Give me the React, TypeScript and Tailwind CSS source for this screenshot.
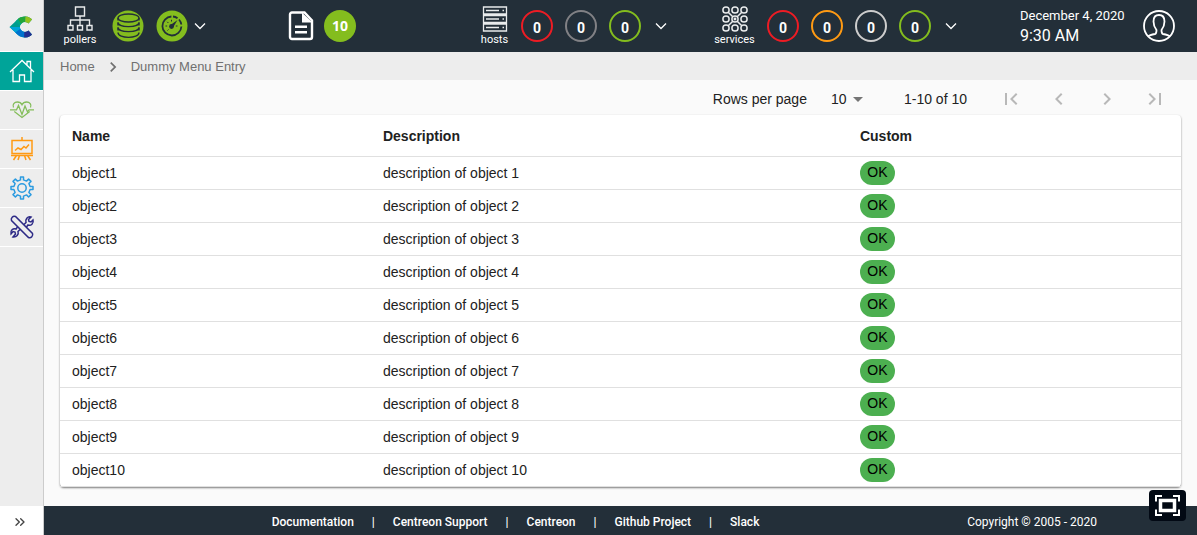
import type { ReactNode } from 'react';
import { ChevronsRight } from 'lucide-react';
import { MdArrowDropDown, MdChevronLeft, MdChevronRight, MdFirstPage, MdLastPage } from 'react-icons/md';

const objects = Array.from({ length: 10 }, (_, i) => ({
  name: `object${i + 1}`,
  description: `description of object ${i + 1}`,
  status: 'OK',
}));

const footerLinks = ['Documentation', 'Centreon Support', 'Centreon', 'Github Project', 'Slack'];

function Logo() {
  return (
    <svg width="24" height="24" viewBox="0 0 24 24" aria-hidden="true">
      <clipPath id="logo-shape">
        <path d="M.5 12 8.500 4.500C11 2 14 1.300 17 1.500c2.500.200 4.500 1.200 6 3L19.500 8.500a5 5 0 1 0 0 7L23 19.500c-1.500 1.800-3.500 2.800-6 3-3 .200-6-.500-8.500-3z" />
      </clipPath>
      <g clipPath="url(#logo-shape)">
        <path d="M0 0h24v24H0z" fill="#009c8f" />
        <path d="M6 0h5l3 8.500-3 2L5 5z" fill="#00a887" />
        <path d="M9.500 0H17l-1.500 9-2.500 1-4-6z" fill="#23a638" />
        <path d="M16.500 0H24v12l-8-3z" fill="#94c11f" />
        <path d="M0 12h13v4l-5 4z" fill="#00a3d9" />
        <path d="m5 18.500 6-4.500 5 2-.5 8H8z" fill="#0072ce" />
        <path d="M15.500 14H24v10h-9z" fill="#232f92" />
      </g>
    </svg>
  );
}

function HomeIcon() {
  return (
    <svg width="26" height="26" viewBox="0 0 26 26" fill="none" stroke="#fff" strokeWidth="1.300" aria-hidden="true">
      <path d="M1 14 13 2.500 25 14M4 12v11.500h6.500V17h5v6.500H22V12M18 7V3.500h3.500v7" />
    </svg>
  );
}

function HeartIcon() {
  return (
    <svg width="26" height="26" viewBox="0 0 26 26" fill="none" stroke="#84bd5a" strokeWidth="1.300" aria-hidden="true">
      <path d="M4.500 10.500C3 7.500 5.500 5 8.300 5c2.200 0 3.900 1.200 4.700 2.800C13.800 6.200 15.500 5 17.700 5c2.800 0 5.300 2.500 3.800 5.500M5.300 14.500 13 20.500l7.700-6" />
      <path d="M1 12.800h6.500l2-4.300 3.500 9 3-8.500 2.500 6 1.500-2.200h5" />
    </svg>
  );
}

function ReportIcon() {
  return (
    <svg width="26" height="26" viewBox="0 0 26 26" fill="none" stroke="#ff9a13" strokeWidth="1.500" aria-hidden="true">
      <path d="M3 4.500h20v13H3zM13 1v3.500M2 19.500h22M7.500 19.500l-3 4.500M10.500 19.500 9 24M15.500 19.500 17 24M18.500 19.500l3 4.500" />
      <path d="m6 14.500 3-2.500 3 1.500 3-3 2 1.500 3-3.500" />
    </svg>
  );
}

function GearIcon() {
  return (
    <svg width="26" height="26" viewBox="0 0 26 26" fill="none" stroke="#2b9be0" strokeWidth="1.500" strokeLinejoin="round" aria-hidden="true">
      <path d="M11.500 4.900V2h3v2.900l3 1.200 2.100-2.100 2.400 2.400-2.100 2.100 1.200 3H24v3h-2.900l-1.200 3 2.100 2.100-2.400 2.400-2.100-2.100-3 1.200V24h-3v-2.900l-3-1.200L6.400 22 4 19.600l2.100-2.100-1.200-3H2v-3h2.900l1.200-3L4 6.400 6.400 4l2.100 2.100z" />
      <circle cx="13" cy="13" r="4.200" />
    </svg>
  );
}

function ToolsIcon() {
  return (
    <svg width="26" height="26" viewBox="0 0 26 26" fill="none" stroke="#2d2a86" strokeWidth="1.500" aria-hidden="true">
      <path d="M2.500 6.500c-1-2.500 1.500-5 4-4L23.500 19.500c1 2.500-1.500 5-4 4z" />
      <path d="m15 10.500 2-2c-1-3 1.500-6.500 5-5.500l-2.500 2.500.500 2 2 .500L24 6c1 3.500-2 6-5 5l-1.500 2M11 15.500l-2 2c1 3-1.500 6-5 5.500L6.500 20 6 18l-2-.500L2 20c-1-3.500 2-6 5-5l1.500-2" />
    </svg>
  );
}

function PollersIcon() {
  return (
    <svg width="26" height="26" viewBox="0 0 26 26" fill="none" stroke="#e9ebec" strokeWidth="1.400" aria-hidden="true">
      <path d="M8.500 1h9v9h-9zM13 10v9.500M3.500 19.500V14h19v5.500M1 19.500h5V24H1zM10.500 19.500h5V24h-5zM20 19.500h5V24h-5z" />
    </svg>
  );
}

function HostsIcon() {
  return (
    <svg width="26" height="26" viewBox="0 0 26 26" fill="none" stroke="#e9ebec" strokeWidth="1.300" aria-hidden="true">
      <path d="M1.500 1h23v7h-23zM1.500 9.500h23v7h-23zM1.500 18h23v7h-23zM4 4.500h13M4 13h13M4 21.500h13M20.500 4.500H22M20.500 13H22M20.500 21.500H22" />
    </svg>
  );
}

function ServicesIcon() {
  const centers = [4, 13, 22];
  return (
    <svg width="26" height="26" viewBox="0 0 26 26" fill="none" stroke="#e9ebec" strokeWidth="1.500" aria-hidden="true">
      {centers.map((y) => centers.map((x) => <circle key={`${x}-${y}`} cx={x} cy={y} r="3.100" />))}
      <path d="m6.200 6.200 4.600 4.600M19.800 6.200l-4.600 4.600M6.200 19.800l4.600-4.600M19.800 19.800l-4.600-4.600" />
      <circle cx="13" cy="13" r=".7" fill="#e9ebec" />
    </svg>
  );
}

function DatabaseIcon() {
  return (
    <svg width="32" height="32" viewBox="0 0 32 32" fill="none" stroke="#232f39" strokeWidth="1.400" aria-hidden="true">
      <circle cx="16" cy="16" r="15.500" fill="#84bd1e" stroke="none" />
      <ellipse cx="16.500" cy="8" rx="10.500" ry="4" />
      <path d="M6 12.500c0 5.500 21 5.500 21 0M6 17.500c0 5.500 21 5.500 21 0M6 22.500c0 6.500 21 6.500 21 0" />
      <path d="M6 8v2.500M27 8v2.500M6 12.500v3M27 12.500v3M6 17.500v3M27 17.500v3" />
    </svg>
  );
}

function GaugeIcon() {
  return (
    <svg width="32" height="32" viewBox="0 0 32 32" fill="none" stroke="#232f39" strokeWidth="1.800" aria-hidden="true">
      <circle cx="16" cy="16" r="15.500" fill="#84bd1e" stroke="none" />
      <path d="M17 6.500a9.500 9.500 0 0 1 4.500 1.700M23 9.500a9.500 9.500 0 0 1 2.300 5M25.400 16.500a9.500 9.500 0 1 1-10-10" />
      <circle cx="15.500" cy="16.500" r="2.400" fill="#232f39" stroke="none" />
      <path d="m21.500 10-7 5 2.500 2.500z" fill="#232f39" stroke="none" />
      <path d="M15.500 9.800v1.700M9.500 16h1.700M11.200 11.800l1.200 1.200M11.500 20.500l1-1M21.500 16h-1.700" strokeWidth="1" />
    </svg>
  );
}

function DocumentIcon() {
  return (
    <svg width="26" height="30" viewBox="0 0 26 30" aria-hidden="true">
      <path d="M4 1.500h12.500l7.500 8V26a2 2 0 0 1-2 2H4a2 2 0 0 1-2-2V3.500a2 2 0 0 1 2-2z" fill="none" stroke="#fff" strokeWidth="2.400" />
      <path d="M14 1.500v10h10.500zM7 14.500h12V17H7zM7 20h12v2.500H7z" fill="#fff" />
    </svg>
  );
}

function UserIcon() {
  return (
    <svg width="32" height="32" viewBox="0 0 32 32" fill="none" stroke="#fff" strokeWidth="1.800" aria-hidden="true">
      <circle cx="16" cy="16" r="15" />
      <path d="M5 26.500c1.500-1.500 4-2 7-2.500 1.500-.300 1.500-1.500 1.500-4-2-2.500-3-5-3-8.500C10.500 7 12.500 5 16 5s5.500 2 5.500 6.500c0 3.500-1 6-3 8.500 0 2.500 0 3.700 1.500 4 3 .500 5.500 1 7 2.500" />
    </svg>
  );
}

function FullscreenIcon() {
  return (
    <svg width="27" height="23" viewBox="0 0 27 23" fill="none" stroke="#fff" aria-hidden="true">
      <path d="M2 7.500V2h6M19 2h6v5.500M25 15.500V21h-6M8 21H2v-5.500" strokeWidth="2" />
      <path d="M6.500 6.500h14v10h-14z" strokeWidth="3.500" />
    </svg>
  );
}

function Expand({ label }: { label: string }) {
  return (
    <button type="button" aria-label={label} className="flex w-4 items-center justify-center">
      <svg width="12" height="8" viewBox="0 0 12 8" fill="none" stroke="#fff" strokeWidth="1.300" aria-hidden="true">
        <path d="m1 1.500 5 5 5-5" />
      </svg>
    </button>
  );
}

function Labelled({ icon, label, className }: { icon: ReactNode; label: string; className: string }) {
  return (
    <div className={`flex flex-col items-center pt-0.5 ${className}`}>
      {icon}
      <span className="text-[11px] leading-4">{label}</span>
    </div>
  );
}

function Counter({ label, color }: { label: string; color: string }) {
  return (
    <a href="#" aria-label={label} className={`flex size-8 items-center justify-center rounded-full border-2 pt-1 text-sm font-bold leading-4 ${color}`}>
      0
    </a>
  );
}

const menu = [
  { label: 'Home', icon: <HomeIcon />, color: 'bg-[#00a499]' },
  { label: 'Monitoring', icon: <HeartIcon />, color: '' },
  { label: 'Reporting', icon: <ReportIcon />, color: '' },
  { label: 'Configuration', icon: <GearIcon />, color: '' },
  { label: 'Administration', icon: <ToolsIcon />, color: '' },
];

function Sidebar() {
  return (
    <nav aria-label="Main" className="flex w-11 shrink-0 flex-col border-r border-[#ccc] bg-[#ededed]">
      <a href="#" aria-label="Centreon" className="flex h-[52px] items-center justify-center border-b border-white pr-0.5 pt-0.5">
        <Logo />
      </a>
      {menu.map((item) => (
        <a key={item.label} href="#" aria-label={item.label} className={`flex h-[39px] items-center justify-center border-b border-white ${item.color}`}>
          {item.icon}
        </a>
      ))}
      <button type="button" aria-label="Expand menu" className="mt-auto flex h-[29px] items-center justify-center bg-white pr-1 pt-0.5 text-[#444]">
        <ChevronsRight size={16} strokeWidth={2} />
      </button>
    </nav>
  );
}

function TopBar() {
  return (
    <header className="grid h-[52px] grid-cols-[228fr_192fr_234fr_306fr_177fr] items-center bg-[#232f39] pl-4 font-[Roboto,sans-serif] text-white">
      <div className="flex items-center">
        <Labelled icon={<PollersIcon />} label="pollers" className="w-10" />
        <a href="#" aria-label="Database" className="ml-3"><DatabaseIcon /></a>
        <a href="#" aria-label="Latency" className="ml-3 mr-1"><GaugeIcon /></a>
        <Expand label="Show pollers" />
      </div>
      <div className="flex items-center gap-2.5">
        <DocumentIcon />
        <span className="flex size-8 items-center justify-center rounded-full bg-[#84bd1e] font-['Open_Sans',sans-serif] text-sm font-bold">10</span>
      </div>
      <div className="flex items-center gap-3">
        <Labelled icon={<HostsIcon />} label="hosts" className="w-[29px]" />
        <Counter label="Down hosts" color="border-[#ed1c24]" />
        <Counter label="Unreachable hosts" color="border-[#818185]" />
        <Counter label="Up hosts" color="border-[#84bd1e]" />
        <Expand label="Show hosts" />
      </div>
      <div className="flex items-center gap-3">
        <Labelled icon={<ServicesIcon />} label="services" className="w-[41px]" />
        <Counter label="Critical services" color="border-[#ed1c24]" />
        <Counter label="Warning services" color="border-[#ff9a13]" />
        <Counter label="Unknown services" color="border-[#cdcdcd]" />
        <Counter label="Ok services" color="border-[#84bd1e]" />
        <Expand label="Show services" />
      </div>
      <div className="flex items-center justify-between pr-[22px]">
        <div>
          <div className="whitespace-nowrap text-[13px] leading-5">December 4, 2020</div>
          <div className="text-base leading-5">9:30 AM</div>
        </div>
        <button type="button" aria-label="User profile"><UserIcon /></button>
      </div>
    </header>
  );
}

function Pagination() {
  const buttons = [
    { label: 'First page', icon: <MdFirstPage size={24} /> },
    { label: 'Previous page', icon: <MdChevronLeft size={24} /> },
    { label: 'Next page', icon: <MdChevronRight size={24} /> },
    { label: 'Last page', icon: <MdLastPage size={24} /> },
  ];
  return (
    <div className="flex h-[35px] items-center justify-end pr-0.5 pt-0.5">
      <label htmlFor="rows-per-page">Rows per page</label>
      <div className="relative ml-6 mr-[34px]">
        <select id="rows-per-page" defaultValue="10" className="w-[39px] appearance-none">
          <option>10</option>
          <option>20</option>
          <option>50</option>
        </select>
        <MdArrowDropDown size={24} className="pointer-events-none absolute -top-0.5 right-0 text-[#757575]" />
      </div>
      <span className="mr-5">1-10 of 10</span>
      {buttons.map((button) => (
        <button key={button.label} type="button" disabled aria-label={button.label} className="flex w-12 justify-center text-[#b8b8b8]">
          {button.icon}
        </button>
      ))}
    </div>
  );
}

function ObjectTable() {
  return (
    <table className="w-full table-fixed border-separate border-spacing-0 rounded-sm bg-white text-left shadow-[0_1px_2px_rgba(0,0,0,0.5)]">
      <thead>
        <tr className="h-[42px]">
          <th className="w-[27.740%] border-b border-[#e0e0e0] px-3">Name</th>
          <th className="w-[42.550%] border-b border-[#e0e0e0] px-3">Description</th>
          <th className="border-b border-[#e0e0e0] px-3">Custom</th>
        </tr>
      </thead>
      <tbody>
        {objects.map((object) => (
          <tr key={object.name} className="h-[33px]">
            <td className="border-b border-[#e0e0e0] px-3">{object.name}</td>
            <td className="border-b border-[#e0e0e0] px-3">{object.description}</td>
            <td className="border-b border-[#e0e0e0] px-3">
              <span className="flex h-6 w-[35px] items-center justify-center rounded-full bg-[#4caf50] pb-0.5 text-black">{object.status}</span>
            </td>
          </tr>
        ))}
      </tbody>
    </table>
  );
}

function Footer() {
  return (
    <footer className="mt-auto flex h-[29px] items-center bg-[#232f39] pl-5 pr-[100px] pt-0.5 font-[Roboto,sans-serif] text-xs font-medium text-white">
      <ul className="flex flex-1 justify-center">
        {footerLinks.map((link, i) => (
          <li key={link}>
            {i > 0 && <span className="px-[18px]">|</span>}
            <a href="#">{link}</a>
          </li>
        ))}
      </ul>
      <span className="font-normal">Copyright © 2005 - 2020</span>
    </footer>
  );
}

export default function App() {
  return (
    <div className="flex min-h-screen bg-[#fafafa] font-['Liberation_Sans',Arial,sans-serif] text-sm text-[#212121]">
      <Sidebar />
      <div className="flex min-w-0 flex-1 flex-col">
        <TopBar />
        <nav aria-label="Breadcrumb" className="flex h-7 items-center bg-[#ededed] px-4 pt-0.5 text-[13px] text-[#707070]">
          <a href="#">Home</a>
          <MdChevronRight size={20} className="mx-2" />
          <a href="#">Dummy Menu Entry</a>
        </nav>
        <main className="px-4 pb-4">
          <Pagination />
          <ObjectTable />
        </main>
        <Footer />
      </div>
      <button type="button" aria-label="Full screen" className="fixed bottom-3.5 right-[11px] flex h-[31px] w-[37px] items-center justify-center rounded-sm bg-[#020914]">
        <FullscreenIcon />
      </button>
    </div>
  );
}
